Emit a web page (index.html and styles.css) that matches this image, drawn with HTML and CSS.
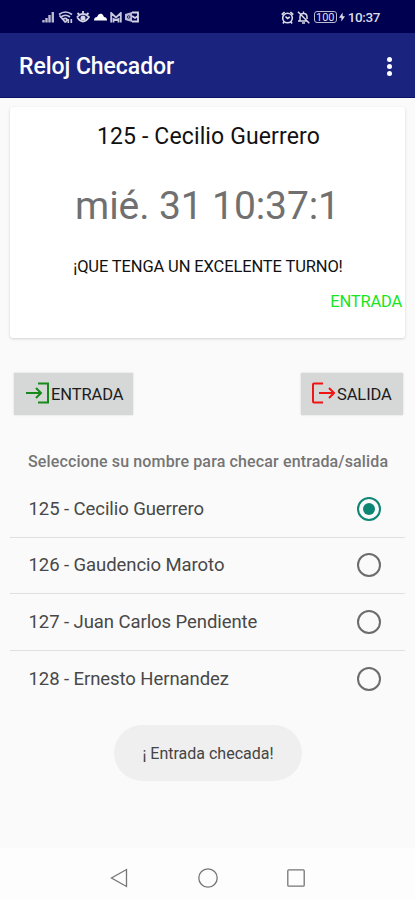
FILE: index.html
```
<!DOCTYPE html>
<html lang="es">
<head>
  <meta charset="UTF-8">
  <meta name="viewport" content="width=device-width, initial-scale=1.0">
  <title>Reloj Checador</title>
  <link rel="stylesheet" href="styles.css">
</head>
<body>
<div class="screen">

  <!-- Status bar -->
  <div class="status-bar">
    <div class="status-left">
      <svg width="13" height="12" viewBox="0 0 13 12"><path d="M1.5 11.5V9M4.5 11.5V7M7.5 11.5V4M10.8 11.5V1" stroke="#b9b9d2" stroke-width="2.4" fill="none"/></svg>
      <svg width="15" height="13" viewBox="0 0 15 13" fill="none" stroke="#c8c8dc" stroke-width="1.7"><path d="M1 3.5Q7.5-1.5 14 3.5M3 6Q7.5 2.5 12 6M5 8.3Q7.5 6.5 9 8.3L7.5 11.5M1.5 4.5L7.5 11.5M10.3 8v4M13.3 8v4"/></svg>
      <svg width="14" height="12" viewBox="0 0 14 12" fill="none" stroke="#d5d5e5" stroke-width="1.8"><path d="M1 6Q7-.5 13 6Q7 15 1 6M1.5 2l2 2M7 0v3M12.5 2l-2 2"/><circle cx="7" cy="7" r="1.6" fill="#d5d5e5"/></svg>
      <svg width="13" height="8" viewBox="0 0 13 8"><path d="M0 7.5Q0 4 3 4Q4.5 0 7.5 .8Q9 1.2 10 4Q13 4 13 7.5Z" fill="#fff"/></svg>
      <svg width="12" height="11" viewBox="0 0 12 11"><path d="M1.2 10.5V1L6 5.5L10.8 1V10.5M3.5 10.5V7L6 8L8.5 7V10.5" fill="none" stroke="#c8c8dc" stroke-width="1.8"/></svg>
      <svg width="14" height="12" viewBox="0 0 14 12"><path d="M0 3l7-2v10l-7-2z" fill="#b9b9d2"/><path d="M7 1.5h6v9H7M7 5l3 2 3-2" fill="none" stroke="#d5d5e5" stroke-width="1.8"/><circle cx="3.7" cy="6" r="1.3" fill="none" stroke="#000051" stroke-width=".8"/></svg>
    </div>
    <div class="status-right">
      <svg width="13" height="13" viewBox="0 0 13 13" fill="none" stroke="#dcdce8" stroke-width="1.6"><circle cx="6.5" cy="7" r="4.8"/><path d="M.7 3.6L3.6 1M12.3 3.6L9.4 1M4.5 5.5l2 2 2.3-1.5M3.2 10.5L2 12.5M9.8 10.5L11 12.5"/></svg>
      <svg width="13" height="13" viewBox="0 0 13 13" fill="none" stroke="#dcdce8" stroke-width="1.5"><path d="M3 10V6Q3 2.5 6.5 2.5Q10 2.5 10 6V8M1 10H9.5M6.5.5V2.5M5 12H8M1 .8L12.3 12.3"/></svg>
      <span class="battery">100</span>
      <svg class="bolt" width="6" height="10" viewBox="0 0 6 10"><path d="M3.6 .5L0 5.8H2.4V9.5L6 4.2H3.6z" fill="#dcdce8"/></svg>
      <span class="clock">10:37</span>
    </div>
  </div>

  <header class="app-bar">
    <h1>Reloj Checador</h1>
    <div class="menu-dots"><i></i><i></i><i></i></div>
  </header>

  <main>
    <section class="card">
      <h2>125 - Cecilio Guerrero</h2>
      <p class="date">mié. 31 10:37:1</p>
      <p class="message">¡QUE TENGA UN EXCELENTE TURNO!</p>
      <p class="type">ENTRADA</p>
    </section>

    <div class="buttons">
      <button class="btn-in">
        <svg width="24" height="22" viewBox="0 0 24 22" fill="none" stroke="#188a1c" stroke-width="2"><path d="M0 11H15M10 6l5 5-5 5M12 1.5H22V20.5H12"/></svg><span>ENTRADA</span>
      </button>
      <button class="btn-out">
        <svg width="24" height="22" viewBox="0 0 24 22" fill="none" stroke="#f01414" stroke-width="2"><path d="M12 1.5H3Q2 1.5 2 2.5V19.5Q2 20.5 3 20.5H12M8 11H23M18 6l5 5-5 5"/></svg><span>SALIDA</span>
      </button>
    </div>

    <h3>Seleccione su nombre para checar entrada/salida</h3>

    <ul class="names">
      <li><span>125 - Cecilio Guerrero</span><b class="radio checked"></b></li>
      <li><span>126 - Gaudencio Maroto</span><b class="radio"></b></li>
      <li><span>127 - Juan Carlos Pendiente</span><b class="radio"></b></li>
      <li><span>128 - Ernesto Hernandez</span><b class="radio"></b></li>
    </ul>

    <div class="toast"><span>¡ Entrada checada!</span></div>
  </main>

  <!-- Android navigation -->
  <nav>
    <svg width="18" height="20" viewBox="0 0 18 20"><path d="M16.5 1.5V18.5L1.5 10Z"/></svg>
    <svg width="20" height="20" viewBox="0 0 20 20"><circle cx="10" cy="10" r="9.2"/></svg>
    <svg width="18" height="18" viewBox="0 0 18 18"><rect x=".8" y=".8" width="16.4" height="16.4" rx="1"/></svg>
  </nav>
</div>
</body>
</html>
```
FILE: styles.css
```
* {
  box-sizing: border-box;
  margin: 0;
  padding: 0;
}

body {
  font-family: Roboto, sans-serif;
  background-color: #fafafa;
}

.screen {
  width: 415px;
  height: 900px;
  display: flex;
  flex-direction: column;
  overflow: hidden;
  white-space: nowrap;
}

.status-bar {
  height: 33px;
  background-color: #000051;
  color: #dcdce8;
  display: flex;
  justify-content: space-between;
  padding: 1px 35px 0 42px;
}

.status-left, .status-right {
  display: flex;
  align-items: center;
  gap: 3px;
}

.status-left {
  gap: 3.2px;
}

.battery {
  width: 23px;
  height: 12px;
  margin-left: 1px;
  border: 1px solid #b9b9d2;
  border-radius: 3px;
  font-size: 11px;
  line-height: 11px;
  text-align: center;
}

.bolt {
  margin-left: -1px;
}

.clock {
  font-size: 13.5px;
  font-weight: 500;
  letter-spacing: -0.4px;
}

.app-bar {
  height: 65px;
  background-color: #1a237e;
  border-bottom: 1px solid #0b1268;
  display: flex;
  align-items: center;
  justify-content: space-between;
  padding: 2px 23px 0 19px;
}

h1 {
  color: #fff;
  font-size: 23px;
  font-weight: 500;
  letter-spacing: -0.05px;
}

.menu-dots {
  display: flex;
  flex-direction: column;
  gap: 2px;
}

.menu-dots i {
  width: 5px;
  height: 5px;
  border-radius: 50%;
  background-color: #fff;
}

main {
  flex: 1;
  padding: 9px 10px 0;
}

.card {
  height: 231px;
  background-color: #fff;
  border-radius: 3px;
  box-shadow: 0 1px 3px rgba(0, 0, 0, 0.16);
  padding-top: 15px;
  text-align: center;
}

h2 {
  padding-left: 2px;
  font-size: 23px;
  font-weight: 400;
  line-height: 30px;
  letter-spacing: 0.13px;
  color: #111;
}

.date {
  margin-top: 27px;
  font-size: 39px;
  line-height: 54px;
  letter-spacing: -0.1px;
  color: #707070;
}

.message {
  margin-top: 24px;
  padding-left: 1px;
  font-size: 16.5px;
  line-height: 20px;
  letter-spacing: -0.13px;
  color: #111;
}

.type {
  margin-top: 15px;
  padding-right: 3px;
  text-align: right;
  font-size: 16.5px;
  line-height: 20px;
  letter-spacing: -0.2px;
  color: #19e51e;
}

.buttons {
  display: flex;
  justify-content: space-between;
  margin-top: 35px;
  padding: 0 2px 0 4px;
}

button {
  height: 42px;
  display: flex;
  align-items: center;
  gap: 2px;
  border: none;
  background-color: #d6d8d7;
  box-shadow: 0 0 2px rgba(0, 0, 0, 0.15);
  font-family: inherit;
  font-size: 16.5px;
  letter-spacing: -0.1px;
  color: #1c1c1c;
}

button svg {
  margin-top: -2px;
}

.btn-in {
  width: 119px;
  padding-left: 12px;
  gap: 1px;
}

.btn-out {
  width: 102px;
  padding-left: 10px;
}

h3 {
  margin-top: 37px;
  padding-left: 18px;
  font-size: 16px;
  font-weight: 500;
  line-height: 20px;
  letter-spacing: 0.14px;
  color: #757575;
}

.names {
  list-style: none;
  margin-top: 9px;
}

.names li {
  height: 56.5px;
  display: flex;
  align-items: center;
  justify-content: space-between;
  padding: 0 24px 0 18.5px;
  border-bottom: 1px solid #e0e0e0;
  font-size: 18.5px;
  letter-spacing: -0.07px;
  color: #484848;
}

.names li:last-child {
  border-bottom: none;
}

.radio {
  width: 24px;
  height: 24px;
  border: 2px solid #6c6c6c;
  border-radius: 50%;
  display: flex;
  align-items: center;
  justify-content: center;
}

.radio.checked {
  border-color: #0d8674;
}

.radio.checked::after {
  content: "";
  width: 12px;
  height: 12px;
  border-radius: 50%;
  background-color: #0d8674;
}

.toast {
  width: 188px;
  height: 56px;
  margin: 18px 0 0 104px;
  border-radius: 28px;
  background-color: #efefef;
  display: flex;
  align-items: center;
  justify-content: center;
  padding-top: 1px;
  font-size: 16px;
  color: #444;
}

nav {
  height: 52px;
  background-color: #fdfdfd;
  display: flex;
  align-items: center;
  padding: 7px 0 0 110px;
  gap: 70px;
}

nav svg {
  fill: none;
  stroke: #757575;
  stroke-width: 1.3;
}

nav svg:last-child {
  margin-left: -1px;
}
```
